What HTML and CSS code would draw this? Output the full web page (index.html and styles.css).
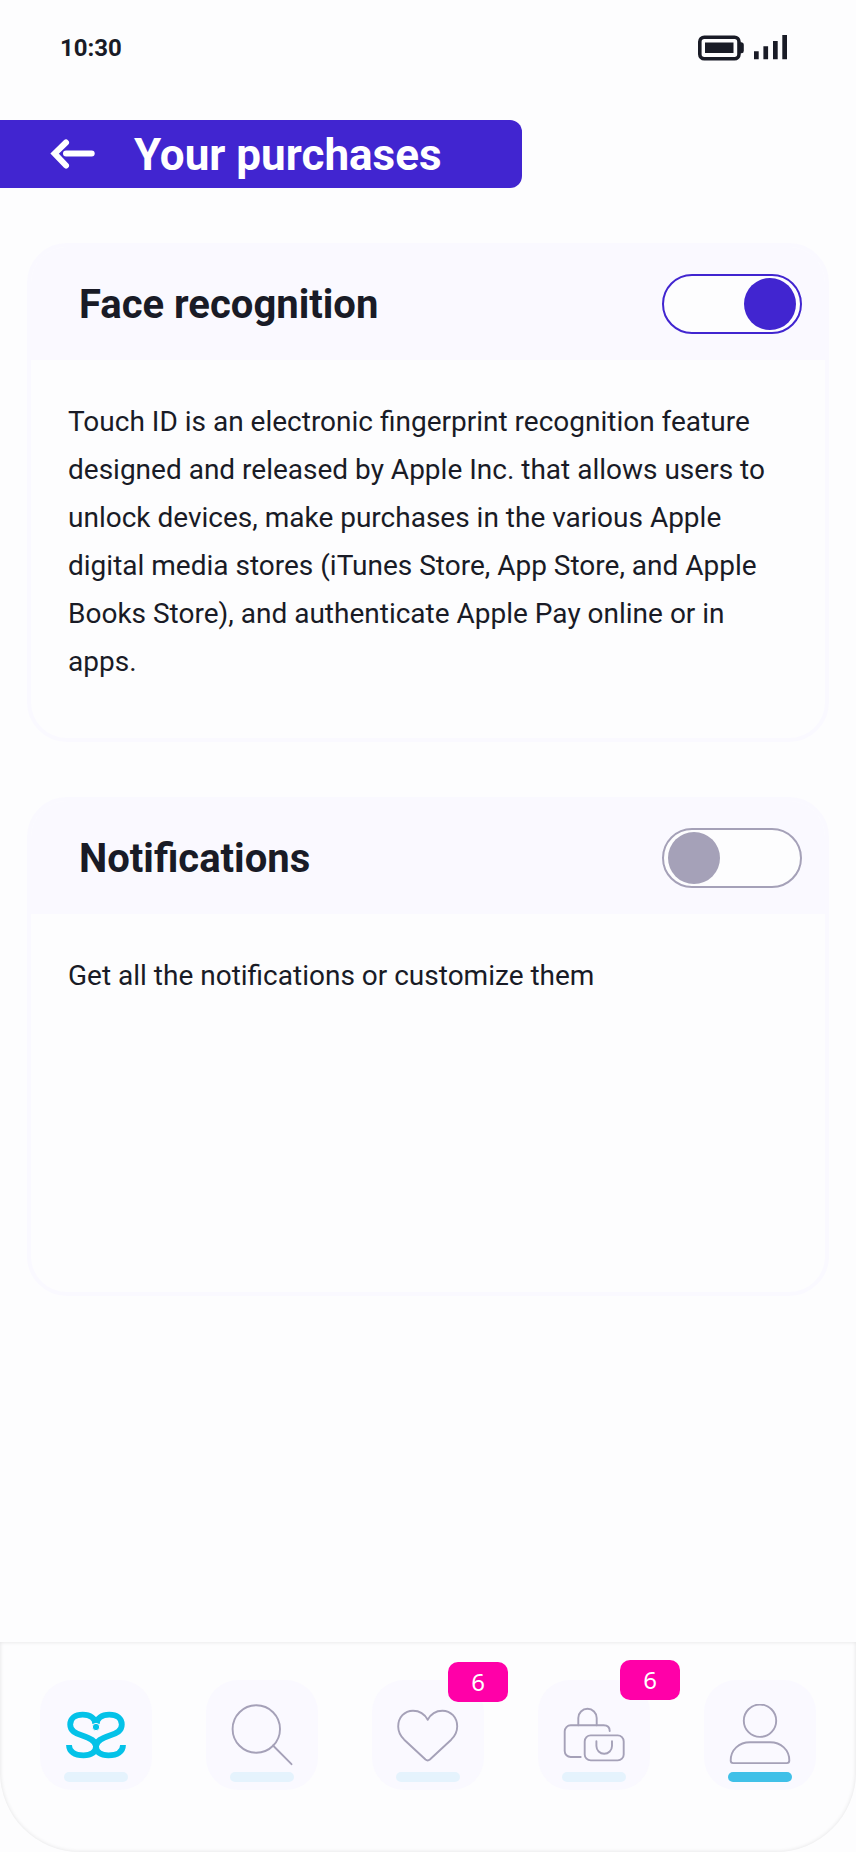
FILE: index.html
```html
<!DOCTYPE html>
<html lang="en">
<head>
<meta charset="utf-8">
<title>Your purchases</title>
<link rel="stylesheet" href="styles.css">
</head>
<body>
<div class="screen">
  <div class="status">
    <span class="clock">10:30</span>
    <svg class="status-icons" width="90" height="28" viewBox="0 0 90 28">
      <rect x="2.8" y="3.2" width="39.2" height="21.6" rx="4.5" fill="none" stroke="#191b26" stroke-width="3.6"/>
      <rect x="8" y="8.5" width="28.5" height="10.5" fill="#191b26"/>
      <path d="M43 8.3h1.5q2.3 0 2.3 2.5v6q0 2.5-2.3 2.5H43z" fill="#191b26"/>
      <path d="M57 17.3h4.7v8H57zM66.4 12.3h4.7v13h-4.7zM76 7h4.7v18.3H76zM85.3 1H90v24.3h-4.7z" fill="#191b26"/>
    </svg>
  </div>

  <header class="title-bar">
    <svg width="46" height="32" viewBox="0 0 46 32" fill="none" stroke="#fff" stroke-width="6" stroke-linecap="round">
      <path d="M16 4.500 4.600 15.600 16 27.500" stroke-linejoin="miter"/>
      <path d="M16 15.500h25.700"/>
    </svg>
    <h1>Your purchases</h1>
  </header>

  <main class="cards">
    <section class="card">
      <div class="card-head">
        <h2>Face recognition</h2>
        <span class="toggle on"><span class="knob"></span></span>
      </div>
      <p>Touch ID is an electronic fingerprint recognition feature designed and released by Apple Inc. that allows users to unlock devices, make purchases in the various Apple digital media stores (iTunes Store, App Store, and Apple Books Store), and authenticate Apple Pay online or in apps.</p>
    </section>
    <section class="card">
      <div class="card-head">
        <h2>Notifications</h2>
        <span class="toggle"><span class="knob"></span></span>
      </div>
      <p>Get all the notifications or customize them</p>
    </section>
  </main>

  <nav class="tabs">
    <a class="tab">
      <svg class="logo" width="64" height="68" viewBox="0 0 64 68">
        <path d="M31.300 20C31.300 14.500 26.500 10.700 18.700 10.700 11 10.700 6.200 14.300 6.200 20.500c0 6.500 5.300 8.800 12 11C26.500 34.200 32 37 32 42.600c0 5.400-4.300 8.700-12.500 8.700C10.500 51.300 5 47.500 5 41"/>
        <path d="M32.700 20C32.700 14.500 37.500 10.700 45.300 10.700c7.700 0 12.500 3.600 12.500 9.800 0 6.500-5.300 8.800-12 11C37.500 34.200 32 37 32 42.600c0 5.400 4.300 8.700 12.500 8.700C53.500 51.300 59 47.500 59 41"/>
        <circle class="dot" cx="32" cy="23" r="3.700"/>
      </svg>
      <span class="bar"></span>
    </a>
    <a class="tab">
      <svg class="line" width="64" height="68" viewBox="0 0 64 68">
        <circle cx="26.300" cy="25" r="23.700"/>
        <path d="M43 41.500 61.500 60.200"/>
      </svg>
      <span class="bar"></span>
    </a>
    <a class="tab">
      <svg class="line" width="64" height="68" viewBox="0 0 64 68">
        <path d="M31.700 15.800C28.500 9.700 23 6.700 17 6.700 8.500 6.700 2.200 13.500 2.200 22.500c0 5.500 2.300 9.500 6 13.200L29.500 55.500q2.200 1.800 4.400 0L55.200 35.700c3.700-3.700 6-7.700 6-13.200 0-9-6.300-15.800-14.800-15.800-6 0-11.500 3-14.700 9.100z"/>
      </svg>
      <span class="bar"></span>
      <span class="badge">6</span>
    </a>
    <a class="tab">
      <svg class="line" width="64" height="68" viewBox="0 0 64 68">
        <path d="M16.300 21.300V14a9.200 9.200 0 0 1 18.400 0v7.300"/>
        <path d="M18.700 53H8.700a6 6 0 0 1-6-6V27.300a6 6 0 0 1 6-6H41.700q6 0 6 5.700"/>
        <rect x="22.700" y="31.400" width="39" height="25" rx="6"/>
        <path d="M34.400 37.300v4.700a7.800 7.800 0 0 0 15.600 0v-4.700"/>
      </svg>
      <span class="bar"></span>
      <span class="badge raised">6</span>
    </a>
    <a class="tab active">
      <svg class="line" width="64" height="68" viewBox="0 0 64 68">
        <circle cx="32" cy="16.700" r="16.200"/>
        <path d="M22 38.300h20c11 0 19.300 7.500 19.300 18.200q0 2.600-2.500 2.600H5.200q-2.500 0-2.500-2.600C2.700 45.800 11 38.300 22 38.300z"/>
      </svg>
      <span class="bar"></span>
    </a>
  </nav>
</div>
</body>
</html>
```
FILE: styles.css
```css
* { box-sizing: border-box; margin: 0; padding: 0; }
body {
  background: #fdfdfe;
  color: #191b26;
  font-family: Roboto, sans-serif;
}
.screen {
  width: 856px;
  height: 1852px;
  display: flex;
  flex-direction: column;
  overflow: hidden;
}
svg { display: block; flex: none; }

.status {
  height: 120px;
  padding: 34px 69px 0 60px;
  display: flex;
  justify-content: space-between;
  align-items: flex-start;
}
.clock { font-size: 24px; line-height: 28px; font-weight: 700; }

.title-bar {
  width: 522px;
  height: 68px;
  flex: none;
  padding-left: 50px;
  display: flex;
  align-items: center;
  gap: 38px;
  background: #4125d0;
  border-radius: 0 12px 12px 0;
  color: #fff;
}
h1 { padding-top: 2px; font-size: 44px; line-height: 66px; font-weight: 700; white-space: nowrap; }

.cards {
  padding: 55px 27px 0;
  display: flex;
  flex-direction: column;
  gap: 55px;
}
.card {
  height: 499px;
  border: 4px solid #faf9ff;
  border-radius: 40px;
  overflow: hidden;
}
.card-head {
  height: 113px;
  padding: 1px 23px 0 48px;
  display: flex;
  align-items: center;
  justify-content: space-between;
  background: #faf9ff;
}
h2 { padding-top: 2px; font-size: 40px; line-height: 48px; font-weight: 700; }
.card p { padding: 38px 50px 0 37px; font-size: 28px; line-height: 48px; }

.toggle {
  width: 140px;
  height: 60px;
  padding: 2px 4px;
  display: flex;
  border: 2px solid #a5a1b8;
  border-radius: 30px;
  background: #fdfdfe;
}
.knob { width: 52px; height: 52px; border-radius: 50%; background: #a5a1b8; }
.toggle.on { justify-content: flex-end; border-color: #4125d0; }
.on .knob { background: #4125d0; }

.tabs {
  height: 210px;
  margin-top: auto;
  padding: 38px 40px 0;
  display: flex;
  justify-content: space-between;
  border-radius: 0 0 80px 80px;
  box-shadow: inset 0 0 4px rgba(0, 0, 0, .11);
}
.tab {
  position: relative;
  width: 112px;
  height: 110px;
  padding-top: 24px;
  display: flex;
  flex-direction: column;
  align-items: center;
  border-radius: 32px;
  background: #faf9ff;
}
.bar { width: 64px; height: 10px; border-radius: 5px; background: #e5f3fd; }
.active .bar { background: #40c0e8; }
.line { fill: none; stroke: #a5a1b8; stroke-width: 1.9; stroke-linecap: round; stroke-linejoin: round; }
.logo { fill: none; stroke: #04c2e8; stroke-width: 5.8; }
.dot { fill: #04c2e8; stroke: #faf9ff; stroke-width: 1; }
.badge {
  position: absolute;
  top: -18px;
  right: -24px;
  width: 60px;
  height: 40px;
  border-radius: 10px;
  background: #ff00a8;
  color: #fff;
  font: 24px/39px "Noto Sans", sans-serif;
  text-align: center;
}
.badge.raised { top: -20px; right: -30px; }
```
